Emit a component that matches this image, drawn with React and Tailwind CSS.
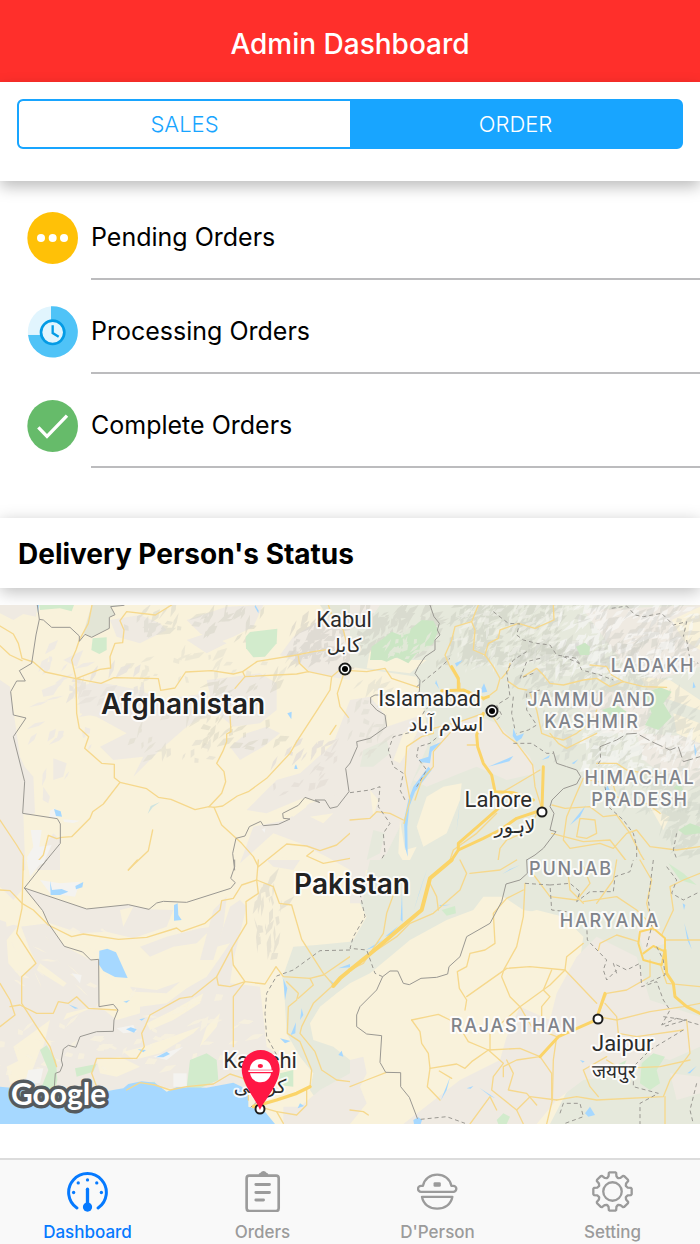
import React, { useState } from "react";

/* ---------- list icons ---------- */

function PendingIcon() {
  return (
    <svg viewBox="0 0 153 156" className="h-[52px] w-[51px] shrink-0" aria-hidden="true">
      <ellipse cx="77" cy="78" rx="76" ry="78" fill="#ffc107" />
      <circle cx="42" cy="78" r="12" fill="#fff" />
      <circle cx="77" cy="78" r="12" fill="#fff" />
      <circle cx="111" cy="78" r="12" fill="#fff" />
    </svg>
  );
}

function ProcessingIcon() {
  return (
    <svg viewBox="0 0 153 156" className="h-[52px] w-[51px] shrink-0" aria-hidden="true">
      <path d="M72 1 A75 77 0 1 1 3 86 L72 86 Z" fill="#4fc3f7" />
      <path d="M72 1 A75 77 0 0 0 3 86 L72 86 Z" fill="#e1f5fe" />
      <circle cx="77" cy="79" r="35" fill="#e1f5fe" stroke="#039be5" strokeWidth="8" />
      <path d="M77 58 V81 L95 92" fill="none" stroke="#039be5" strokeWidth="7" />
    </svg>
  );
}

function CompleteIcon() {
  return (
    <svg viewBox="0 0 153 156" className="h-[52px] w-[51px] shrink-0" aria-hidden="true">
      <ellipse cx="77" cy="78" rx="76" ry="78" fill="#66bb6a" />
      <path d="M34 82 L60 109 L120 47" fill="none" stroke="#fff" strokeWidth="10" />
    </svg>
  );
}

/* ---------- tab bar icons ---------- */

function GaugeIcon() {
  return (
    <svg viewBox="201 93 124 124" className="size-[41px]" fill="none" stroke="currentColor" aria-hidden="true">
      <path d="M231 205 A57 57 0 1 1 295 205" strokeWidth="9" strokeLinecap="round" />
      <path d="M263 148 V198" strokeWidth="10" strokeLinecap="round" />
      <g fill="currentColor" stroke="none">
        <circle cx="263" cy="202" r="14" />
        <circle cx="263" cy="120" r="5" />
        <circle cx="235" cy="129" r="5" />
        <circle cx="291" cy="129" r="5" />
        <circle cx="221" cy="158" r="5" />
        <circle cx="305" cy="158" r="5" />
      </g>
    </svg>
  );
}

function ClipboardIcon() {
  return (
    <svg viewBox="726 93 124 124" className="size-[41px]" fill="none" stroke="currentColor" aria-hidden="true">
      <rect x="740" y="107" width="97" height="107" rx="8" strokeWidth="8" />
      <path d="M777 107 V101 Q778 99 782 98 Q785 93 791 93 Q797 93 800 98 Q804 99 805 101 V107 Z" fill="currentColor" stroke="none" />
      <path d="M768 134 H809 M768 158 H809 M768 181 H791" strokeWidth="9" strokeLinecap="round" />
    </svg>
  );
}

function HelmetIcon() {
  return (
    <svg viewBox="201 93 124 124" className="size-[41px]" fill="none" stroke="currentColor" strokeWidth="7" strokeLinejoin="round" aria-hidden="true">
      <path d="M219 138 C223 117 241 104 262 104 C283 104 301 117 305 138 H311 A9 9 0 0 1 311 156 H213 A9 9 0 0 1 213 138 Z" />
      <path d="M216 171 H308 C304 194 285 207 262 207 C239 207 220 194 216 171 Z" />
      <rect x="251" y="127" width="22" height="14" rx="4" fill="currentColor" stroke="none" />
    </svg>
  );
}

const GEAR_TURNS = [0, 45, 90, 135, 180, 225, 270, 315];
function gearPath() {
  const tooth = [[-16, -41], [-12, -46], [-11, -56], [-8, -58], [8, -58], [11, -56], [12, -46], [16, -41]];
  const pts = GEAR_TURNS.flatMap((deg) => {
    const a = (deg * Math.PI) / 180;
    return tooth.map(([x, y]) => `${(x * Math.cos(a) - y * Math.sin(a)).toFixed(1)} ${(x * Math.sin(a) + y * Math.cos(a)).toFixed(1)}`);
  });
  return `M${pts.join("L")}Z`;
}

function GearIcon() {
  return (
    <svg viewBox="-62 -62 124 124" className="size-[41px]" fill="none" stroke="currentColor" strokeWidth="7" strokeLinejoin="round" aria-hidden="true">
      <path d={gearPath()} />
      <circle r="28" />
    </svg>
  );
}

/* ---------- map ---------- */

function randomFrom(seed) {
  let s = seed;
  return () => {
    s = (s * 1664525 + 1013904223) % 4294967296;
    return s / 4294967296;
  };
}

/* Slanted slivers that read as hill shading inside a rectangle. */
function Ridges({ x, y, w, h, count, seed, fill, opacity, size = 40, lean = -0.8 }) {
  const rnd = randomFrom(seed);
  let d = "";
  for (let i = 0; i < count; i += 1) {
    const px = x + (rnd() + rnd() * 0.3 - 0.15) * w;
    const py = y + rnd() * h;
    const len = size * (0.4 + rnd() * 1.3);
    const a = lean + (rnd() - 0.5) * 1.2;
    const t = 3 + rnd() * size * 0.22;
    const dx = Math.cos(a) * len;
    const dy = Math.sin(a) * len;
    d += `M${px.toFixed(0)} ${py.toFixed(0)}l${(dx * 0.5 - t * 0.6).toFixed(0)} ${(dy * 0.5 - t).toFixed(0)}L${(px + dx).toFixed(0)} ${(py + dy).toFixed(0)}l${(-dx * 0.4 + t * 0.5).toFixed(0)} ${(-dy * 0.4 + t * 0.8).toFixed(0)}Z`;
  }
  return <path d={d} fill={fill} fillOpacity={opacity} />;
}

function Lines({ items, ...rest }) {
  return (
    <g fill="none" strokeLinejoin="round" strokeLinecap="round" {...rest}>
      {items.map((p) => (
        <polyline key={p} points={p} />
      ))}
    </g>
  );
}

function Areas({ items, fill, ...rest }) {
  return (
    <g fill={fill} {...rest}>
      {items.map((p) => (
        <polygon key={p} points={p} />
      ))}
    </g>
  );
}

const BORDER = { stroke: "#9a9892", strokeWidth: 3 };
const DASH = { stroke: "#9a9892", strokeWidth: 3, strokeDasharray: "12 9", strokeLinecap: "butt" };
const ROAD = { stroke: "#f6d88c", strokeWidth: 4 };
const HIGHWAY = { stroke: "#fbd468", strokeWidth: 10 };
const SAND = "#efeae2";
const WATER = "#a6d8ff";
const PARK = "#d2ebcc";

function NorthWest() {
  return (
    <g transform="translate(0 -15)">
      <Areas
        fill={SAND}
        items={[
          "0,15 112,15 108,50 70,42 40,60 0,40",
          "0,240 30,260 60,470 74,500 100,530 105,640 80,645 70,640 76,810 0,810",
          "235,260 290,245 420,270 480,300 620,280 640,330 560,380 480,450 400,530 430,470 340,480 300,440 380,400 290,350 240,340",
          "330,60 420,45 480,70 500,90 420,130 350,110",
          "560,60 680,20 790,15 760,80 700,110 650,130 600,100",
          "620,240 700,230 780,220 830,250 830,330 780,370 700,380 640,330",
          "880,110 960,60 1050,40 1050,240 990,230 930,215 900,190 840,165",
          "830,540 900,520 1000,430 1050,300 1050,580 1012,620 915,592 800,640 740,630 790,580",
          "760,680 860,660 930,610 1050,570 1050,810 980,770 900,730 820,700 720,790",
          "740,400 800,380 840,400 790,440 720,480 690,440",
          "160,475 200,490 190,530 160,540",
          "130,560 150,590 145,610 128,600",
          "125,270 185,245 160,285 130,290",
          "190,180 250,150 230,200",
          "110,770 160,700 180,720 180,810 110,810",
          "560,120 620,100 680,130 620,160",
        ]}
      />
      <Areas fill="#e3e5d6" items={["275,15 372,15 332,22 345,44 328,52 328,85 275,112 250,100", "960,15 1050,15 1050,50 990,60"]} />
      <Areas fill="#f9f2db" items={["840,770 900,735 930,750 900,790", "930,650 1000,640 970,670", "860,640 900,600 920,620 880,650"]} />
      <Ridges x={390} y={50} w={200} h={70} count={20} seed={3} fill="#d8d5c9" opacity={0.5} />
      <Ridges x={600} y={50} w={170} h={80} count={20} seed={5} fill="#d4d2c4" opacity={0.5} />
      <Ridges x={370} y={180} w={440} h={80} count={26} seed={9} fill="#dcd9cc" opacity={0.4} />
      <Ridges x={370} y={340} w={240} h={150} count={24} seed={13} fill="#e0dccf" opacity={0.6} />
      <Ridges x={620} y={250} w={200} h={200} count={44} seed={17} fill="#d8d4c4" opacity={0.5} />
      <Ridges x={870} y={80} w={180} h={130} count={90} seed={19} fill="#cfccc4" opacity={0.5} />
      <Ridges x={820} y={440} w={220} h={150} count={26} seed={21} fill="#e6e0d8" opacity={0.9} />
      <Ridges x={190} y={230} w={240} h={110} count={22} seed={23} fill="#e8e3db" opacity={0.9} />
      <Ridges x={80} y={150} w={180} h={420} count={22} seed={29} fill={SAND} opacity={1} />
      <Areas fill={PARK} items={["118,15 222,15 215,34 180,25 120,30", "278,115 320,112 320,150 298,162 274,150", "750,96 832,86 830,130 795,170 760,172 738,145 737,110"]} />
      <Areas fill="#f4f3f0" items={["92,690 125,690 118,740 155,735 130,790 85,806 82,770 100,740", "150,632 165,625 170,655 148,652", "190,658 240,662 220,669 192,666", "785,688 796,684 794,698"]} />
      <Areas fill={WATER} items={["162,627 182,634 186,650 168,648", "766,15 776,32 775,40 764,20", "862,340 875,335 874,358", "884,500 888,493 893,507 883,507", "110,15 117,15 114,40"]} />
      <Areas fill="#cfe4e0" items={["443,642 452,618 480,606 458,622"]} />
      <Lines
        {...ROAD}
        items={[
          "0,78 40,102 55,130 66,175 100,186 135,216 228,236",
          "0,137 30,165 66,182",
          "276,15 265,70 238,120 228,150 215,180 228,236 230,340 238,385 266,410 254,445 305,490 343,493 343,533 360,547 440,566 475,592 513,598 585,629 627,620 642,622",
          "515,15 466,45 380,35 360,62 372,90 368,128 345,130 330,170 332,204 300,208 228,236 303,250 342,233 475,236 482,271 525,264 557,216 635,212 700,222 728,215 735,230 890,222 925,215 995,230 1030,200",
          "735,230 705,265",
          "728,215 772,184 890,165 940,155 985,148",
          "985,15 1000,60 1030,90 1040,130 1050,140",
          "895,168 898,190 925,215",
          "995,230 990,270 955,325 890,425 870,460 800,535 745,575 712,588 668,618 642,622",
          "1030,225 1012,280 1020,320 1045,352",
          "690,345 693,395 680,402 680,425 668,455 650,490 672,515 677,545 665,580 627,620",
          "642,622 665,675 725,730 760,770 775,800",
          "360,547 310,612 278,635 270,655 215,710 185,712 170,716 145,706 130,765 100,800",
          "458,690 445,752 400,795 385,810",
          "0,660 50,735 70,768 70,810",
          "775,800 860,732 920,738 960,752 1010,735 1050,700",
          "940,752 920,768 970,790 1050,775",
          "990,403 1008,376",
        ]}
      />
      <Lines
        {...BORDER}
        items={[
          "112,15 118,58 108,105 95,190 58,212 76,243 50,243 32,275 40,345 78,354 70,366 40,410 74,545 68,640 172,656 181,672 181,730 115,810",
          "118,58 130,60 155,82 210,82 238,108 238,124 255,103 275,112 328,85 328,52 345,44 332,20 372,16",
          "1050,490 1037,505 1047,575 1012,620 990,625 975,600 945,600 960,608 915,592 895,616 848,640 850,655 870,657 835,673 790,677 782,664 748,680 735,708 708,715 698,760 704,810",
        ]}
      />
    </g>
  );
}

function NorthEast() {
  return (
    <g transform="translate(1050 -15)">
      <Areas fill="#e6e9dc" items={["0,15 1050,15 1050,810 60,810 110,700 90,560 180,450 230,370 200,230 0,200"]} />
      <Areas
        fill={SAND}
        items={[
          "0,15 90,15 60,60 0,80",
          "0,300 60,290 105,345 110,380 200,350 240,420 180,560 170,640 110,760 60,810 0,810",
          "300,370 390,350 440,370 540,470 560,520 470,540 380,500 330,520 230,560 190,540 250,440",
          "640,290 820,270 900,320 880,400 760,400 690,330",
          "700,30 1050,15 1050,200 920,240 820,190 760,110",
          "860,400 1050,410 1050,560 960,540 880,480",
        ]}
      />
      <Areas fill="#e6e9dc" items={["40,450 110,420 120,460 70,500 30,500", "70,690 105,700 90,760 50,780"]} />
      <Areas fill="#f9f2db" items={["0,220 60,215 190,260 200,285 130,290 70,280 0,285", "965,60 1050,20 1050,150 1000,120", "130,480 160,400 215,370 180,440 150,490", "60,570 85,600 70,650", "230,590 280,560 335,550 330,600 290,700 220,740 200,680", "150,660 165,750 200,740 170,800 145,760", "60,150 160,180 230,180 180,220 50,205", "870,230 960,240 1050,300 1050,330 900,280", "970,340 1050,370 1050,430 980,400", "900,620 960,650 940,690"]} />
      <Ridges x={20} y={40} w={220} h={140} count={130} seed={31} fill="#c9c9bd" opacity={0.42} />
      <Ridges x={290} y={20} w={340} h={190} count={210} seed={37} fill="#c5c8bb" opacity={0.42} />
      <Ridges x={300} y={30} w={350} h={200} count={110} seed={38} fill="#f6f6f0" opacity={0.5} size={34} />
      <Ridges x={520} y={140} w={400} h={170} count={190} seed={41} fill="#c9cbc1" opacity={0.4} />
      <Ridges x={640} y={30} w={360} h={220} count={160} seed={43} fill="#f8f8f6" opacity={0.65} />
      <Ridges x={680} y={30} w={360} h={190} count={110} seed={47} fill="#cbcac4" opacity={0.42} />
      <Ridges x={600} y={310} w={440} h={190} count={180} seed={53} fill="#cdd0c6" opacity={0.42} />
      <Ridges x={720} y={400} w={320} h={120} count={100} seed={59} fill="#f7f7f5" opacity={0.65} />
      <Ridges x={820} y={510} w={230} h={140} count={80} seed={61} fill="#cfd2c8" opacity={0.45} />
      <Ridges x={940} y={640} w={110} h={140} count={50} seed={67} fill="#cfd6c8" opacity={0.55} />
      <Ridges x={0} y={240} w={100} h={240} count={26} seed={71} fill="#dedbd0" opacity={0.5} />
      <Areas fill="#cbe6c4" items={["65,140 100,115 125,95 150,105 185,85 215,60 250,62 265,90 250,130 225,150 200,160 175,190 140,172 110,185 95,180 60,180", "678,140 705,128 720,140 718,165 690,165", "885,280 930,262 965,275 940,310 965,350 925,390 885,375 905,340", "755,330 800,315 830,335 790,350", "970,565 990,545 1000,575", "985,690 1020,670 1050,680 1050,700 1005,705"]} />
      <Ridges x={90} y={100} w={150} h={80} count={26} seed={73} fill="#e6e9dc" opacity={0.8} size={34} />
      <Areas fill={WATER} items={["162,660 175,600 190,560 235,500 245,510 195,575 178,620 172,680 173,770 165,740", "415,500 490,468 478,484", "205,480 235,470 240,440 275,425 245,455 240,490 215,487", "395,265 402,250 412,275 395,278", "258,240 268,268 256,250", "315,190 338,180 320,200", "490,385 500,408 522,400 515,415 500,425 488,408", "575,480 600,465 596,474", "660,675 708,615 690,650", "665,490 685,478 672,492", "765,572 772,556 780,572", "320,690 330,600 325,650", "1030,245 1037,262 1028,265", "1032,430 1040,455 1035,470"]} />
      <Lines
        {...ROAD}
        items={[
          "0,212 50,215 105,205 125,235 205,262",
          "385,15 365,65 315,80 305,120 285,165 300,200 330,250 330,272",
          "610,15 612,60 555,85 505,70 450,90 445,115 415,130 405,165 430,200 450,235 440,270 400,300",
          "365,65 375,90 370,150 405,165",
          "480,190 475,210 455,235",
          "475,245 505,265 530,270",
          "520,230 560,205 580,225 600,250 640,255 700,240 740,235 780,260 820,245 880,260 950,262",
          "720,195 770,200 785,225 820,245",
          "540,280 560,330 575,400 600,410 640,420 680,400 730,360 740,330",
          "600,400 625,430 650,445 700,420 740,400",
          "425,345 460,400 500,430 530,470 548,495 555,560 575,625",
          "400,340 330,365 250,385 250,400 215,410 170,440 165,520 180,600 162,670",
          "330,365 250,455 250,500 215,540 195,600",
          "380,435 352,435",
          "570,510 545,525 460,575",
          "0,660 60,655 80,635 120,640 160,660",
          "700,535 680,580 650,650 640,720 660,745 750,730 790,745 830,700 860,690 900,740 980,750 1050,740",
          "606,615 645,625 720,620 760,650 800,645 840,700 870,760 900,810",
          "700,535 790,555 800,590 850,615 890,610 930,640",
          "690,655 735,660 740,700 710,715 680,710 690,655",
          "560,640 540,690 470,720 450,745 440,810",
          "740,490 800,490 830,510 940,530",
          "440,640 380,700 310,750 290,810",
          "605,700 700,725 780,720 850,810",
        ]}
      />
      <Lines {...HIGHWAY} strokeWidth="9" items={["325,750 400,715 450,690 500,655 575,630", "285,810 325,750 325,730 400,665 445,625", "400,340 380,405 383,440 400,490 425,525 435,575 490,578 550,600", "580,500 576,625", "275,272 340,270 400,295 415,290", "305,200 325,235 325,265"]} />
      <Lines
        {...DASH}
        items={[
          "505,85 500,105 520,120 560,130 600,135 620,165 680,175 695,210 750,225 790,240",
          "530,155 490,180 470,215 480,290 440,315 455,345 440,360",
          "430,35 475,70 510,72",
          "570,175 530,185 510,235 550,220",
          "785,25 830,18 855,45 880,50 935,40 970,75 1010,65 1000,110",
          "640,170 690,190",
          "1010,120 1020,180 1045,190",
          "200,260 262,210 300,175",
          "275,400 240,430 205,440 200,470 230,510 200,560",
          "270,290 225,330 190,395 130,410 115,450 130,500 160,520 150,570 165,600",
          "0,578 60,570 90,560 85,620 120,670 100,700 105,760 75,810",
          "570,270 530,280 530,330 560,375 535,390 500,400",
          "490,290 485,340 495,390",
          "490,430 545,430 590,460 610,460",
          "750,440 752,480 740,500",
          "765,560 775,620 820,660 850,700 860,740 860,800",
          "980,700 970,750 985,790 940,810",
        ]}
      />
      <Lines
        {...BORDER}
        items={[
          "240,15 252,50 268,70 262,90 270,105 255,120 255,150 225,170 205,200 195,220 210,240 208,275 185,290 130,295 110,285 75,285 62,292 62,310 80,330 105,345 110,380 60,415 20,425 22,440 0,490",
          "610,455 620,490 650,500 680,510 692,530 680,552 640,566 606,600 600,620 612,640 600,690 618,695 580,745 555,765 530,780 540,810",
        ]}
      />
      <Lines
        {...DASH}
        strokeDasharray="34 9"
        items={["750,440 800,420 830,402 860,400 905,425 960,450 985,440 1000,485 1050,470"]}
      />
    </g>
  );
}

function SouthWest() {
  return (
    <g transform="translate(0 765)">
      <Areas
        fill={SAND}
        items={[
          "0,0 68,0 66,90 40,120 0,80",
          "73,84 260,147 385,134 447,148 520,150 500,200 400,235 320,215 240,220 150,190 120,140",
          "0,180 60,200 145,190 193,259 272,300 296,298 297,440 354,450 420,440 500,430 560,385 620,350 690,250 650,260 690,140 720,120 740,140 700,300 690,370 780,380 800,560 830,580 750,680 560,690 460,680 380,690 0,690",
          "420,260 500,230 600,205 640,200 590,250 520,260 450,290",
          "390,380 470,390 540,365 500,400 400,395",
          "640,150 680,110 670,200 640,300 600,300",
          "800,0 900,0 880,30 820,20",
        ]}
      />
      <Areas
        fill="#f9f2db"
        items={[
          "20,240 60,190 90,270 110,310 60,350 25,310",
          "10,130 40,120 55,190 20,200",
          "440,490 520,450 610,400 600,430 520,480 450,510",
          "300,440 420,430 420,460 350,480",
          "120,310 200,370 190,380 110,330",
          "40,560 150,480 130,560 60,620",
          "370,575 430,560 600,500 580,520 480,580 400,600",
          "620,500 660,460 650,500 600,560",
          "150,200 300,235 330,260 280,270 200,240",
          "360,150 400,140 370,200",
          "20,620 120,570 90,650 30,670",
          "290,600 360,590 420,620 350,650 300,640",
          "200,460 280,440 260,450 190,480",
        ]}
      />
      <Ridges x={10} y={210} w={280} h={170} count={20} seed={81} fill="#f7f1df" opacity={0.9} lean={0.6} />
      <Ridges x={330} y={400} w={400} h={210} count={26} seed={83} fill="#f7f1df" opacity={0.8} lean={-0.5} />
      <Ridges x={20} y={500} w={420} h={150} count={26} seed={85} fill="#f7f1df" opacity={0.8} lean={-0.2} />
      <Ridges x={760} y={70} w={80} h={240} count={26} seed={87} fill="#e4dfd0" opacity={0.8} lean={-1.3} size={50} />
      <Areas fill="#e6e9dc" items={["1050,245 950,255 880,260 850,345 860,520 900,590 940,640 930,690 950,720 1000,680 1050,660 1050,600 1000,560 940,540 930,490 960,440 1010,400 1050,370"]} />
      <Areas fill={SAND} items={["850,740 900,740 960,690 1050,640 1050,800 850,800"]} />
      <Areas fill={PARK} items={["120,570 140,556 168,600 172,660 165,690 125,680 145,630", "570,600 620,580 650,600 655,660 600,685 560,685", "225,625 290,612 280,635 230,650", "840,640 880,630 880,680 835,675", "420,668 465,665 465,685 425,685"]} />
      <Areas fill="#f4f3f0" items={["80,0 130,0 90,50", "120,60 180,70 240,65 225,110 150,100", "215,340 245,345 240,370", "85,630 130,625 120,670 75,670", "350,505 400,495 410,515 370,520", "460,590 550,560 500,600", "520,640 560,640 560,680 520,680"]} />
      <Areas fill={WATER} items={["298,272 322,266 348,277 383,354 345,351 310,333 297,314", "522,135 533,130 535,165 545,180 522,182", "150,62 156,90 185,87 205,95 180,105 152,105", "226,78 250,66 247,82 228,88", "378,508 392,502 410,508 402,518", "468,592 500,575 510,582 490,592", "413,568 438,570 430,577", "370,425 390,420 380,428", "418,478 436,474 425,482", "205,433 235,445 225,446", "845,345 862,385 855,420 850,360", "872,525 888,487 886,520", "840,535 872,543 855,550", "900,480 905,445 910,465", "893,745 900,730 912,738", "1015,585 1025,572 1030,590", "990,360 1005,372 998,380", "1015,325 1050,312 1050,322"]} />
      <path d="M0 680 L165 695 L300 697 L370 685 L385 672 L425 664 L465 668 L500 695 L530 682 L620 683 L700 668 L725 680 L745 700 L745 740 L795 755 L825 792 L0 792 Z" fill={WATER} />
      <Lines
        {...ROAD}
        items={[
          "70,0 66,145 50,220 108,310 65,350 65,430 110,500 150,560 170,620",
          "0,90 30,92 66,130 100,150 145,195 215,230 250,222 355,238 440,232 530,204 545,215 615,190 660,150 665,122 700,115 725,75 770,60 775,0",
          "0,370 30,420 45,465 0,500",
          "30,440 60,435 110,460 160,460 175,425 205,430 230,410 265,445 350,450",
          "770,60 775,100 738,125 740,190 695,265 650,350 575,410 540,415 450,465 435,500 425,520 433,560 410,595 290,595 275,640 290,680",
          "770,60 820,80 838,130 875,135 905,238 970,340 1000,375",
          "695,265 700,315 735,365 795,372 828,320 850,350 930,355 970,345 1050,290",
          "650,350 655,375 690,380 735,365 700,410 700,560",
          "860,365 895,400 890,420 865,440 862,520 900,545 935,630 930,680",
          "930,355 940,375 895,415",
          "1000,375 940,430 905,500 900,520 945,575 965,630 1010,660 1050,665",
          "380,690 420,668 465,675 510,690 560,680 640,672 690,642 730,655 745,690 745,720",
          "385,30 412,0",
          "760,735 830,755 850,790",
          "920,690 920,735 890,765 830,755",
        ]}
      />
      <Lines {...HIGHWAY} strokeWidth="12" items={["1050,330 1020,355 1000,378"]} />
      <Lines {...HIGHWAY} items={["760,740 830,720 890,700 930,680"]} />
      <Lines {...DASH} items={["1050,270 960,272 880,330 830,348 800,400 795,460 800,530 830,585 800,700 752,742"]} />
      <Lines
        {...BORDER}
        items={[
          "140,0 73,84 128,152 145,190 193,259 248,276 272,300 296,298 297,440 340,433 354,450 342,480 340,514 290,515 240,530 228,562 205,556 190,567 184,600 188,615 180,635 166,640 163,680",
          "704,0 704,20 692,55 706,68 692,85 560,127 490,124 470,129 447,148 385,134 260,147 73,84",
        ]}
      />
    </g>
  );
}

function SouthEast() {
  return (
    <g transform="translate(1050 765)">
      <Areas fill="#e6e9dc" items={["60,0 1050,0 1050,792 600,792 700,600 690,300 700,230 640,170 520,150 460,110 400,110 370,150 290,180 180,240 120,290 60,340 0,370 0,250 20,170"]} />
      <Areas
        fill={SAND}
        items={[
          "0,0 50,0 40,120 0,160",
          "620,400 680,290 740,230 860,290 900,420 1050,470 1050,560 960,600 880,580 860,640 700,660 620,720 560,792 160,792 330,660 450,600 470,530 510,440 600,480",
          "0,600 40,590 50,640 30,680 50,730 0,792",
          "860,200 930,210 950,250 880,270",
          "960,640 1050,650 1050,700 980,720",
        ]}
      />
      <Areas fill="#f9f2db" items={["0,130 30,130 50,170 10,240 0,240", "370,220 450,180 560,150 640,170 560,200 420,230"]} />
      <Areas fill={PARK} items={["275,150 315,138 318,160 290,167", "875,610 910,580 945,590 920,630 930,670 900,690 870,670", "955,10 1000,40 1040,75 990,60", "440,780 460,760 480,770 470,792 445,792", "790,620 830,600 820,620"]} />
      <Areas fill={WATER} items={["457,42 510,15 480,28", "48,270 100,238 70,262", "105,230 145,198 120,225", "190,155 232,25 210,90", "152,180 156,95 158,185", "268,135 302,134 270,139", "272,722 300,652 290,690", "190,780 205,772 216,780 212,792 192,792", "350,685 370,678 362,686", "388,683 436,715 420,708", "690,600 704,604 698,608", "705,760 720,740 735,765 715,770", "1003,190 1025,268 1012,240", "1012,640 1040,618 1020,640", "998,130 1006,135 1002,150"]} />
      <Lines
        {...ROAD}
        items={[
          "525,70 520,170 500,260 462,328 455,350 480,410 510,440 545,500 620,530",
          "470,325 540,320 645,330 740,430",
          "520,90 470,115 430,160 435,250 405,270 360,280 350,320 322,335 328,385 350,420 345,450",
          "470,325 350,410",
          "645,330 600,375 510,440 420,520 420,570",
          "645,330 650,290 700,250",
          "605,330 580,390 600,410 575,440 575,470",
          "185,480 265,463 300,480 340,520 355,545 415,570 510,565 570,590 605,640 605,720",
          "185,480 210,515 215,550 235,580 240,625 320,612 345,625 365,605 415,570",
          "240,625 232,680 270,720",
          "268,633 305,655",
          "415,570 460,610 430,650 425,690 500,750 520,792",
          "470,600 490,640 475,690 530,700 560,735",
          "620,530 610,600 607,720 590,792",
          "570,590 500,600 460,620 460,650",
          "742,470 800,480 900,455 1000,440 1050,430",
          "742,470 770,400 830,390 900,350 900,300",
          "765,430 800,470 805,520 860,530 1000,510",
          "770,600 810,625 930,620 1020,600",
          "770,590 700,630 720,680 745,710",
          "0,330 40,310 100,220 110,160 150,50",
          "50,290 140,230 180,190 250,160 330,90 350,40 330,0",
          "235,60 260,110 265,150",
          "0,680 50,660 107,638",
          "0,750 40,755 55,765",
          "700,20 720,70 680,120 600,110 540,30",
          "800,0 790,60 740,130",
          "900,190 860,150 800,110 700,125",
          "910,210 890,130 905,60 870,0",
          "935,225 970,150 960,80 1000,60 1050,40",
          "945,240 1050,240",
          "865,245 800,225 750,250 745,270",
          "930,310 950,370 1050,380",
          "620,720 680,710 740,720 940,710 960,660 1020,580 1010,480",
          "500,750 540,710 620,720",
          "945,710 945,792",
          "360,792 420,710 440,750",
          "500,0 450,30 360,40",
          "650,0 660,90 700,130",
        ]}
      />
      <Lines {...HIGHWAY} strokeWidth="12" items={["0,330 50,290 150,205 215,150 240,55 305,0"]} />
      <Lines {...HIGHWAY} strokeWidth="9" items={["570,590 625,530 742,478", "745,460 765,400", "945,270 950,340 970,370 975,410 1010,440 1050,460"]} />
      <Lines {...HIGHWAY} strokeWidth="6" items={["870,215 910,205 945,235 945,265 935,315 880,300 865,250 870,215", "880,280 910,258 945,275"]} />
      <Lines
        {...DASH}
        items={[
          "30,100 45,170 10,230 0,265 50,270 75,340 98,350",
          "525,70 600,75 605,150 650,155",
          "600,75 660,70 690,95 680,125 720,95 790,95 795,50 840,35 850,0",
          "910,0 895,120 905,200 890,260",
          "710,190 712,240 770,300 760,330 770,360 800,330",
          "800,340 790,310 830,330 870,310 875,380 920,365 940,420 960,450 935,495",
          "920,260 940,300 945,345 890,370",
          "950,20 980,60 965,100 1000,120 1050,95",
          "935,495 980,475 1050,495",
          "1000,510 900,570 850,620 850,680 925,700 870,730 870,792",
          "212,778 290,770 345,790",
          "630,760 640,730 690,730 700,770 640,792",
          "940,470 1010,480 940,500",
          "1040,670 1020,750 1030,792",
        ]}
      />
      <Lines
        {...BORDER}
        items={[
          "530,0 532,40 510,60 468,72 455,125 420,190 350,230 330,290 297,320 293,342 260,352 213,355 178,374 160,370 143,333 120,333 98,350 80,390 30,440 20,465 20,500 50,522 95,527 90,607 107,637 152,638 152,680 178,712 202,775",
        ]}
      />
    </g>
  );
}

const LABEL_STYLES = {
  country: "fill-[#222222] text-[28px] font-semibold",
  city: "fill-[#2b2b2b] font-['Roboto'] text-[22px]",
  script: "fill-[#2b2b2b] text-[19px]",
  state: "fill-[#80838a] text-[18px] font-medium tracking-widest",
};

function Label({ x, y, kind = "city", children, anchor = "start" }) {
  return (
    <text
      x={x}
      y={y}
      textAnchor={anchor}
      stroke="#ffffff"
      strokeOpacity="0.85"
      strokeWidth="4"
      strokeLinejoin="round"
      paintOrder="stroke"
      className={LABEL_STYLES[kind]}
    >
      {children}
    </text>
  );
}

function CityDot({ x, y, capital = false }) {
  return (
    <g>
      <circle cx={x} cy={y} r={capital ? 5.5 : 4.5} fill="#fff" stroke="#1c1c1c" strokeWidth="2" />
      {capital && <circle cx={x} cy={y} r="3" fill="#000" />}
    </g>
  );
}

function StatusMap() {
  return (
    <svg viewBox="0 0 700 519" className="block w-full" role="img" aria-label="Map of delivery persons">
      <g transform="scale(0.333333)">
        <rect width="2100" height="1557" fill="#f9f2db" />
        <NorthWest />
        <NorthEast />
        <SouthWest />
        <SouthEast />
      </g>

      <Label x={344} y={22} anchor="middle">Kabul</Label>
      <Label x={344} y={47} kind="script" anchor="middle">كابل</Label>
      <CityDot x={345} y={64} capital />
      <Label x={183} y={109} kind="country" anchor="middle">Afghanistan</Label>
      <Label x={481} y={101} anchor="end">Islamabad</Label>
      <Label x={446} y={126} kind="script" anchor="middle">اسلام آباد</Label>
      <CityDot x={492} y={106} capital />
      <Label x={653} y={67} kind="state" anchor="middle">LADAKH</Label>
      <Label x={592} y={101} kind="state" anchor="middle">JAMMU AND</Label>
      <Label x={592} y={123} kind="state" anchor="middle">KASHMIR</Label>
      <Label x={640} y={179} kind="state" anchor="middle">HIMACHAL</Label>
      <Label x={640} y={201} kind="state" anchor="middle">PRADESH</Label>
      <Label x={532} y={202} anchor="end">Lahore</Label>
      <Label x={515} y={228} kind="script" anchor="middle">لاہور</Label>
      <CityDot x={542} y={207} />
      <Label x={571} y={270} kind="state" anchor="middle">PUNJAB</Label>
      <Label x={352} y={289} kind="country" anchor="middle">Pakistan</Label>
      <Label x={610} y={322} kind="state" anchor="middle">HARYANA</Label>
      <Label x={514} y={427} kind="state" anchor="middle">RAJASTHAN</Label>
      <CityDot x={598} y={414} />
      <Label x={592} y={446}>Jaipur</Label>
      <Label x={592} y={473} kind="script">जयपुर</Label>
      <Label x={260} y={463} anchor="middle">Karachi</Label>
      <Label x={260} y={488} kind="script" anchor="middle">كراچى</Label>
      <CityDot x={260} y={504} />

      <g transform="translate(0 255) scale(0.333333)">
        <path d="M780 750 C770 722 725 672 725 627 A57 57 0 0 1 839 627 C839 672 792 722 780 750 Z" fill="#ff1744" />
        <path d="M749 629 C750 609 764 597 782 597 C800 597 813 609 815 629 Z" fill="#fff" />
        <rect x="745" y="631" width="73" height="5" fill="#fff" />
        <path d="M750 640 H813 C810 657 798 667 782 667 C766 667 753 657 750 640 Z" fill="#fff" />
        <ellipse cx="781" cy="618" rx="8" ry="6" fill="#ff1744" />
      </g>

      <text
        x={11}
        y={500}
        stroke="#555a5e"
        strokeWidth="7"
        strokeLinejoin="round"
        paintOrder="stroke"
        className="fill-white font-['Lato'] text-[30px] font-bold"
      >
        Google
      </text>
    </svg>
  );
}

/* ---------- page ---------- */

const ORDER_ROWS = [
  { label: "Pending Orders", Icon: PendingIcon },
  { label: "Processing Orders", Icon: ProcessingIcon },
  { label: "Complete Orders", Icon: CompleteIcon },
];

const TABS = [
  { label: "Dashboard", Icon: GaugeIcon, active: true },
  { label: "Orders", Icon: ClipboardIcon },
  { label: "D'Person", Icon: HelmetIcon },
  { label: "Setting", Icon: GearIcon },
];

export default function App() {
  const [segment, setSegment] = useState("ORDER");
  return (
    <div className="flex min-h-screen flex-col bg-white font-['Inter','DejaVu_Sans',sans-serif] text-black">
      <header className="bg-[#ff2f2b] pt-6 pb-[18px]">
        <h1 className="text-center text-[28px] leading-10 font-medium text-white">Admin Dashboard</h1>
      </header>

      <main className="flex flex-1 flex-col">
        <section className="relative bg-white px-[17px] pt-[17px] pb-8 shadow-[0_6px_14px_rgba(0,0,0,0.26)]">
          <div className="flex overflow-hidden rounded-md border-2 border-[#18a5ff] bg-[#18a5ff]">
            {["SALES", "ORDER"].map((name) => (
              <button
                key={name}
                type="button"
                aria-pressed={segment === name}
                onClick={() => setSegment(name)}
                className={`h-[46px] flex-1 text-[22px] font-light ${segment === name ? "bg-[#18a5ff] text-white" : "rounded-l-sm bg-white text-[#18a5ff]"}`}
              >
                {name}
              </button>
            ))}
          </div>
        </section>

        <ul className="pt-[5px] pb-[50px]">
          {ORDER_ROWS.map(({ label, Icon }) => (
            <li key={label}>
              <button type="button" className="flex w-full items-stretch gap-[13px] pl-[27px] text-left">
                <span className="flex items-center pt-[9px]">
                  <Icon />
                </span>
                <span className="flex h-[94px] flex-1 items-center border-b-2 border-[#bcbcbe] pt-3 text-[25px]">{label}</span>
              </button>
            </li>
          ))}
        </ul>

        <section className="relative bg-white px-[18px] pt-4 pb-[14px] shadow-[0_4px_16px_rgba(0,0,0,0.26)]">
          <h2 className="text-[28px] leading-10 font-bold">Delivery Person's Status</h2>
        </section>

        <div className="relative mt-[17px]">
          <StatusMap />
        </div>
      </main>

      <nav className="mt-[34px] grid grid-cols-4 border-t-2 border-[#dcdcdc] bg-[#f9f9f9] pt-[11px] pb-px">
        {TABS.map(({ label, Icon, active }) => (
          <a
            key={label}
            href={`#${label}`}
            aria-current={active ? "page" : undefined}
            className={`flex flex-col items-center gap-2 ${active ? "text-[#067aff]" : "text-[#9b9b9b]"}`}
          >
            <Icon />
            <span className="text-[17px] leading-6 font-medium">{label}</span>
          </a>
        ))}
      </nav>
    </div>
  );
}
